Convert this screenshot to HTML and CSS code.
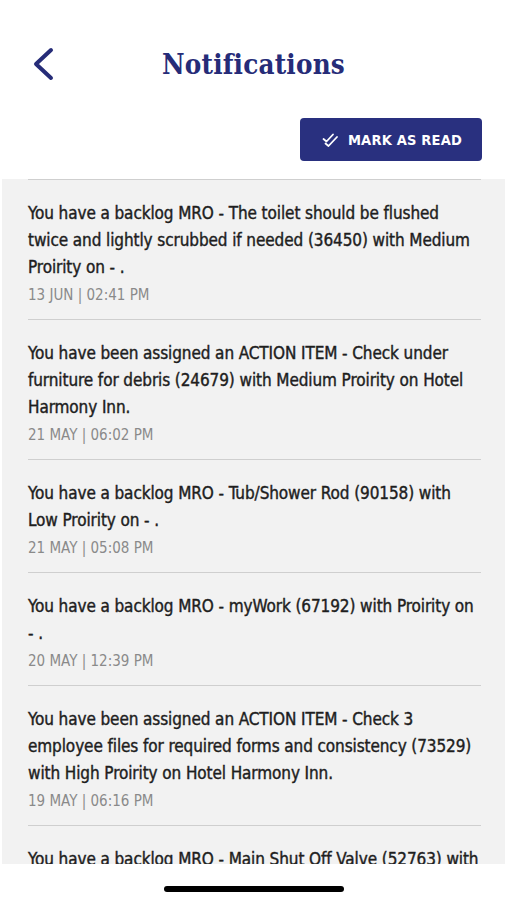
FILE: index.html
```html
<!DOCTYPE html>
<html lang="en">
<head>
  <meta charset="UTF-8">
  <meta name="viewport" content="width=device-width, initial-scale=1.0">
  <title>Notifications</title>
  <link rel="stylesheet" href="styles.css">
</head>
<body>
<div class="screen">
  <header class="top-bar">
    <button class="back-button" aria-label="Back">
      <svg width="24" height="34" viewBox="0 0 24 34"><path d="M20 3 L5 17 L20 31" fill="none" stroke="#262c78" stroke-width="4" stroke-linecap="round" stroke-linejoin="round"/></svg>
    </button>
    <h1>Notifications</h1>
  </header>

  <div class="actions">
    <button class="mark-read">
      <svg width="18" height="16" viewBox="0 0 18 16"><path d="M1.5 7 L4.5 9.5 L11 2.5 M3.5 11.5 L6.5 14 L15 5" fill="none" stroke="#fff" stroke-width="1.8" stroke-linecap="round" stroke-linejoin="round"/></svg>
      MARK AS READ
    </button>
  </div>

  <ul class="list">
    <li class="item">
      <p class="msg">You have a backlog MRO - The toilet should be flushed twice and lightly scrubbed if needed (36450) with Medium Proirity on - .</p>
      <p class="date">13 JUN | 02:41 PM</p>
    </li>
    <li class="item">
      <p class="msg">You have been assigned an ACTION ITEM - Check under furniture for debris (24679) with Medium Proirity on Hotel Harmony Inn.</p>
      <p class="date">21 MAY | 06:02 PM</p>
    </li>
    <li class="item">
      <p class="msg">You have a backlog MRO - Tub/Shower Rod (90158) with Low Proirity on - .</p>
      <p class="date">21 MAY | 05:08 PM</p>
    </li>
    <li class="item">
      <p class="msg">You have a backlog MRO - myWork (67192) with Proirity on - .</p>
      <p class="date">20 MAY | 12:39 PM</p>
    </li>
    <li class="item">
      <p class="msg">You have been assigned an ACTION ITEM - Check 3 employee files for required forms and consistency (73529) with High Proirity on Hotel Harmony Inn.</p>
      <p class="date">19 MAY | 06:16 PM</p>
    </li>
    <li class="item">
      <p class="msg">You have a backlog MRO - Main Shut Off Valve (52763) with High Proirity on - .</p>
      <p class="date">18 MAY | 10:20 AM</p>
    </li>
  </ul>

  <div class="home-bar"><span class="home-indicator"></span></div>
</div>
</body>
</html>
```

FILE: styles.css
```css
body {
  margin: 0;
  background: #fff;
  font-family: "DejaVu Sans Condensed", "Liberation Sans", sans-serif;
  font-stretch: condensed;
}

.screen {
  position: relative;
  height: 900px;
  overflow: hidden;
  display: flex;
  flex-direction: column;
}

.top-bar {
  position: relative;
  flex-shrink: 0;
  height: 80px;
  padding-top: 48px;
  box-sizing: border-box;
  text-align: center;
}

.back-button {
  position: absolute;
  left: 31px;
  top: 47px;
  background: none;
  border: none;
  padding: 0;
  cursor: pointer;
}

h1 {
  margin: 0;
  font-family: "DejaVu Serif", "Liberation Serif", serif;
  font-weight: bold;
  font-size: 27.5px;
  line-height: 32px;
  color: #262c78;
  letter-spacing: 0.2px;
}

.actions {
  flex-shrink: 0;
  display: flex;
  justify-content: flex-end;
  padding: 38px 25px 18px 0;
}

.mark-read {
  width: 182px;
  height: 43px;
  display: flex;
  align-items: center;
  justify-content: center;
  gap: 8px;
  padding: 0 0 0 2px;
  background: #29307f;
  color: #fff;
  border: none;
  border-radius: 4px;
  font-family: "DejaVu Sans Condensed", sans-serif;
  font-stretch: condensed;
  font-weight: bold;
  font-size: 14.5px;
  letter-spacing: 0.2px;
  cursor: pointer;
}

.list {
  list-style: none;
  margin: 0 2px;
  padding: 0 24px 0 26px;
  background: #f2f2f2;
  flex: 1;
}

.item {
  border-top: 1px solid #cfcfcf;
  padding: 20px 0 14px;
}

.msg {
  margin: 0;
  font-size: 17px;
  letter-spacing: -0.1px;
  line-height: 27px;
  color: #1e1e1e;
  -webkit-text-stroke: 0.4px #1e1e1e;
}

.date {
  margin: 4px 0 0;
  font-size: 15px;
  line-height: 20px;
  color: #8a8a8a;
}

.home-bar {
  position: absolute;
  left: 0;
  right: 0;
  bottom: 0;
  height: 36px;
  background: #fff;
  display: flex;
  justify-content: center;
  padding-top: 22px;
  box-sizing: border-box;
}

.home-indicator {
  width: 180px;
  height: 6px;
  border-radius: 3px;
  background: #000;
}
```
